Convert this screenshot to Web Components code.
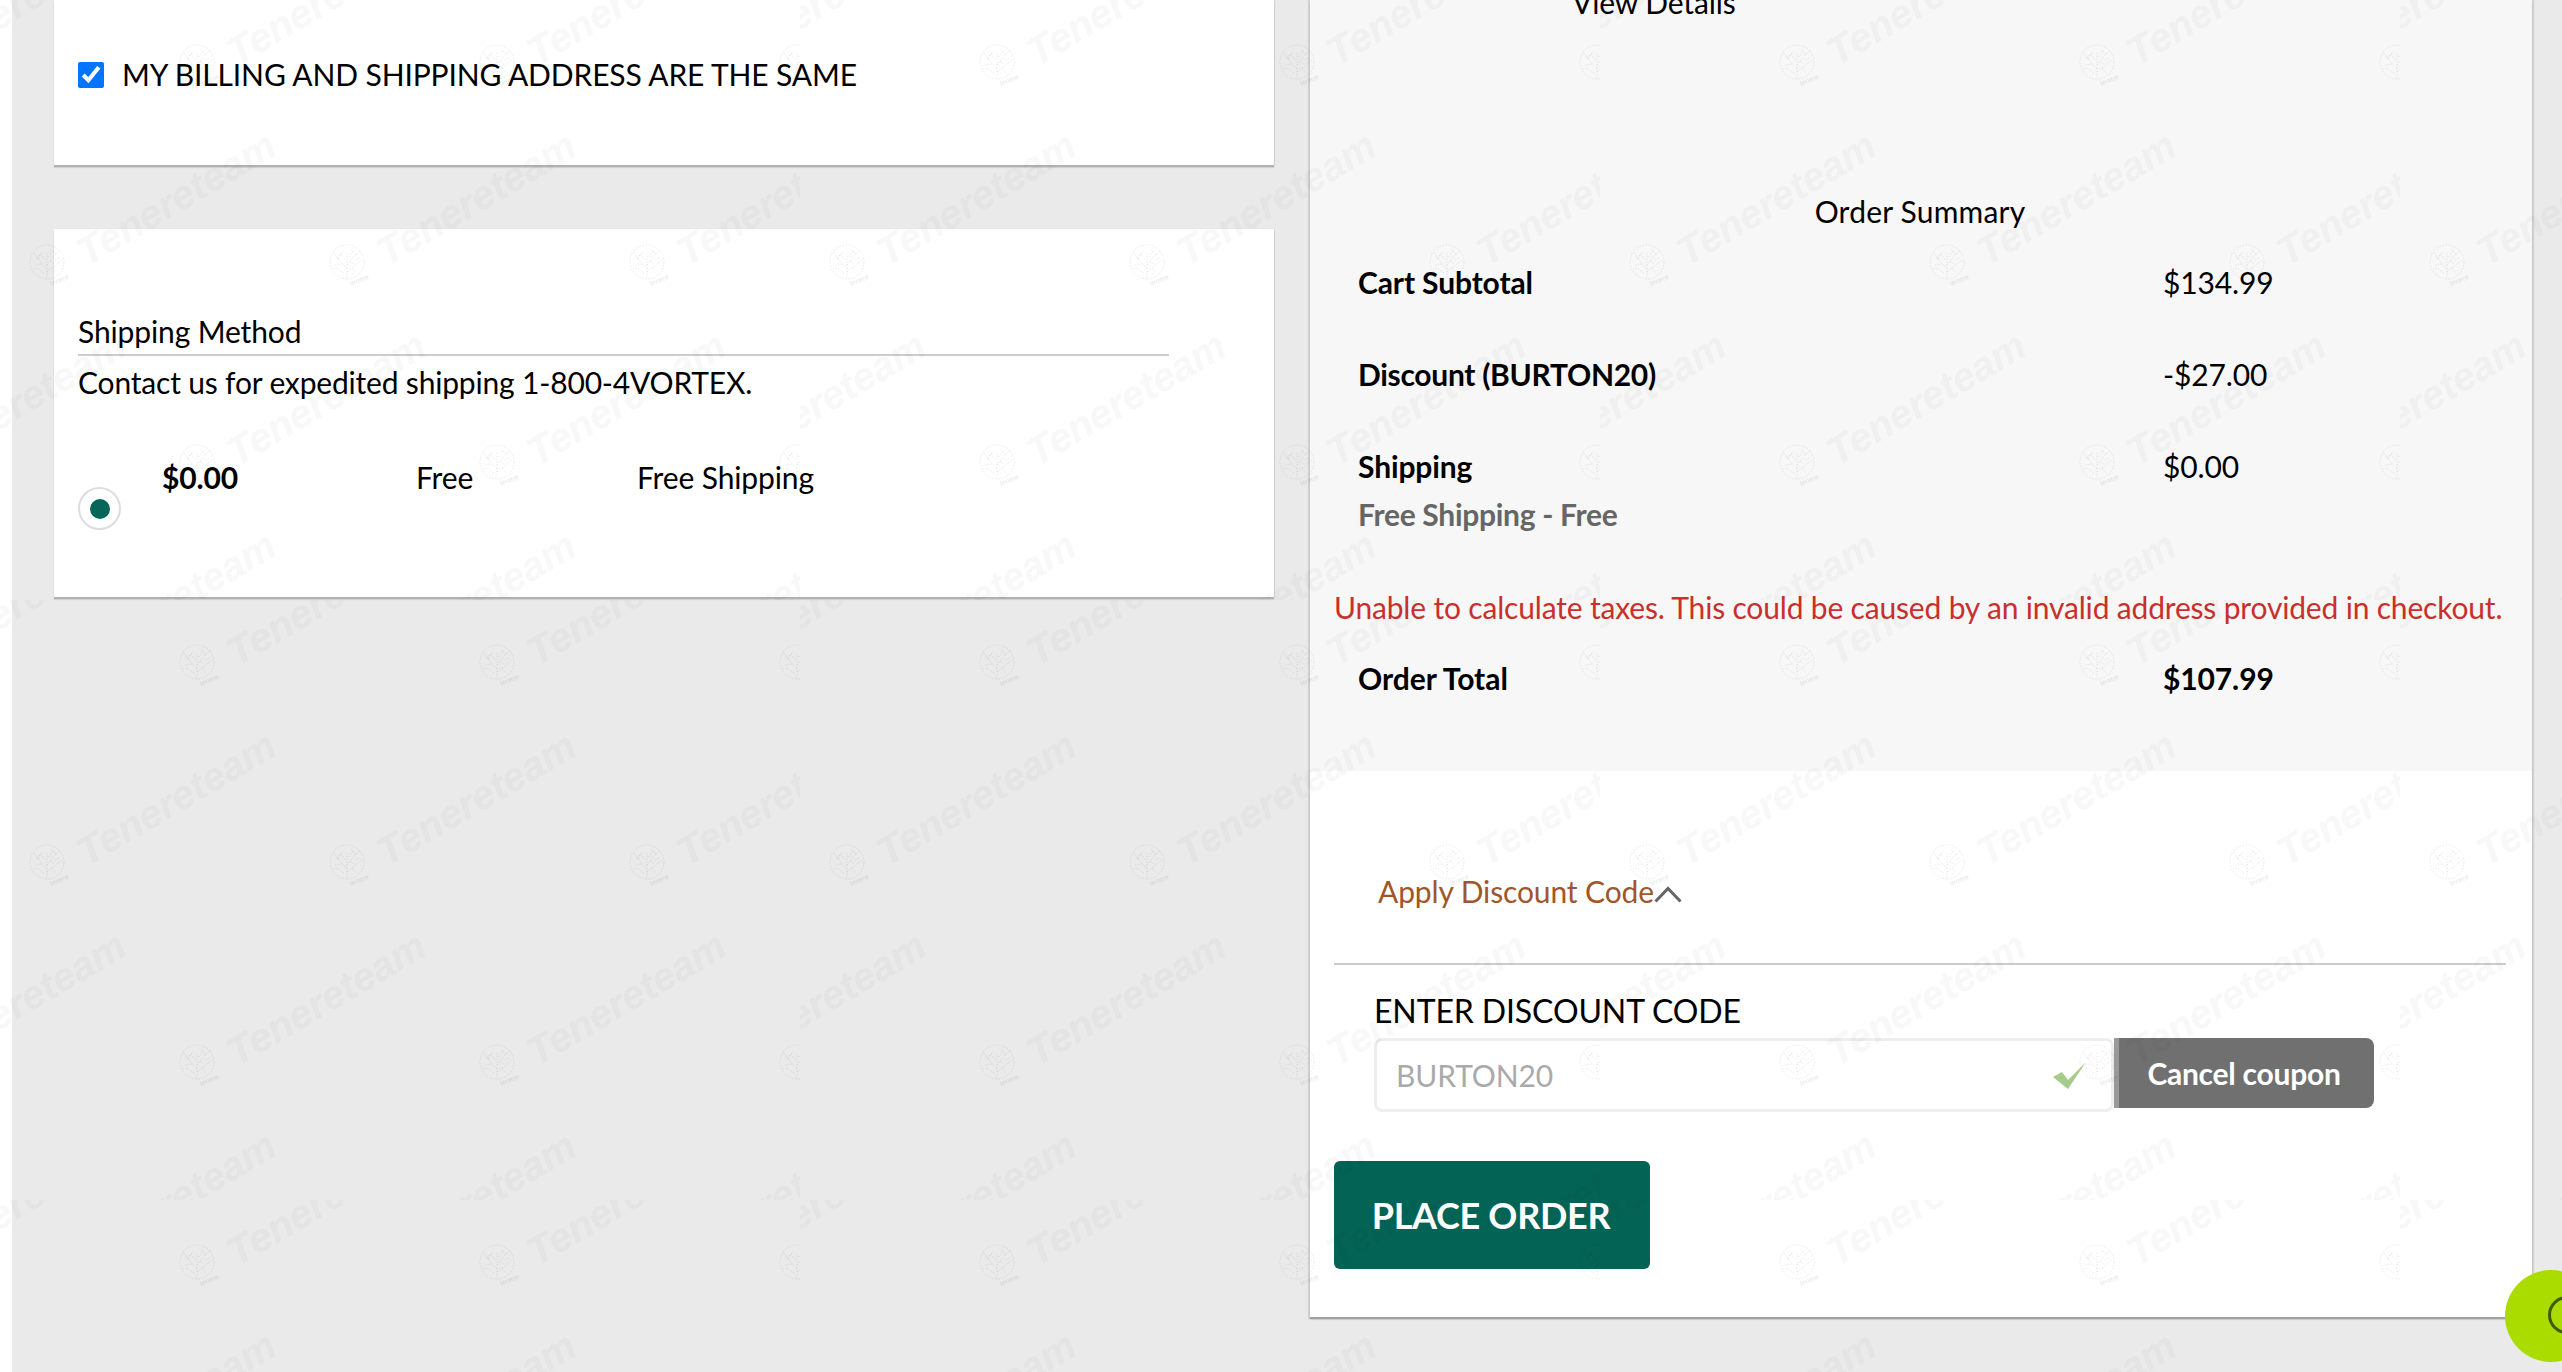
<!DOCTYPE html>
<html lang="en"><head><meta charset="utf-8"><title>Checkout</title>
<style>
html,body{margin:0;padding:0;background:#fff;overflow:hidden}
body{font-family:Lato,"Liberation Sans",sans-serif;color:#000}
</style></head><body>
<checkout-page>
  <co-card slot="left" style="height:165px">
    <same-address>MY BILLING AND SHIPPING ADDRESS ARE THE SAME</same-address>
  </co-card>
  <co-card slot="left" style="height:368px;margin-top:64px">
    <ship-method></ship-method>
  </co-card>
  <order-panel slot="right"></order-panel>
</checkout-page>
<water-mark></water-mark>
<chat-bubble></chat-bubble>
<script>
const T=(css,html)=>{const t=document.createElement('template');t.innerHTML='<style>'+css+'</style>'+html;return t;};
const def=(name,tpl)=>customElements.define(name,class extends HTMLElement{constructor(){super();this.attachShadow({mode:'open'}).appendChild(tpl.content.cloneNode(true));}});

def('checkout-page',T(`
:host{display:block;width:2562px;height:1372px;overflow:hidden;background:#fff;padding-left:12px;box-sizing:border-box}
.main{height:100%;background:#eaeaea;display:grid;grid-template-columns:1220px 1222px;column-gap:36px;padding-left:42px;align-items:start}
.col{display:block}
`,`<div class="main"><div class="col"><slot name="left"></slot></div><div class="col"><slot name="right"></slot></div></div>`));

def('co-card',T(`
:host{display:block;background:#fff;box-shadow:0 2px 1px rgba(0,0,0,.17),0 3px 1px rgba(0,0,0,.08),1px 0 1px rgba(0,0,0,.07);box-sizing:border-box;padding:0 24px}
`,`<slot></slot>`));

def('same-address',T(`
:host{display:flex;align-items:center;gap:18px;height:150px;font-size:30px;line-height:40px;letter-spacing:-.12px}
input{width:26px;height:26px;margin:0 0 1px}
span{position:relative;top:-1px}
`,`<input type="checkbox" checked aria-label="same address"><span><slot></slot></span>`));

def('ship-method',T(`
:host{display:block;font-size:30px;line-height:40px;letter-spacing:-.12px;padding-top:82px}
.h{border-bottom:2px solid #ccc;width:1091px;height:43px;line-height:40px}
.c{margin-top:6px;letter-spacing:-.18px}
.opt{display:grid;grid-template-columns:84px 254px 221px 1fr;margin-top:55px;height:100px}
.radio{width:43px;height:43px;box-sizing:border-box;border:2px solid #ddd;border-radius:50%;display:flex;align-items:center;justify-content:center;margin-top:30px}
.radio i{display:block;width:20px;height:20px;border-radius:50%;background:#07665a}
b{font-weight:700}
`,`<div class="h">Shipping Method</div><div class="c">Contact us for expedited shipping 1-800-4VORTEX.</div>
<div class="opt"><div class="radio"><i></i></div><b>$0.00</b><span>Free</span><span>Free Shipping</span></div>`));

def('sum-row',T(`
:host{display:grid;grid-template-columns:805px 1fr;padding-left:48px;line-height:40px}
::slotted([slot=l]){font-weight:700}
`,`<slot name="l"></slot><slot name="v"></slot>`));

def('order-panel',T(`
:host{display:block;height:1317px;background:#fff;box-shadow:0 2px 1px rgba(0,0,0,.17),0 3px 1px rgba(0,0,0,.08),0 0 1px 2px rgba(0,0,0,.1);font-size:30px;line-height:40px;letter-spacing:-.12px}
.top{height:771px;background:#f7f7f7;overflow:hidden;box-sizing:border-box}
.vd{margin-top:-18px;padding-left:262px;height:40px}
.os{margin-top:169px;text-align:center;height:40px;letter-spacing:.2px;padding-right:2px}
sum-row{margin-bottom:52px}
.cart{margin-top:31px}
.tight{letter-spacing:-.3px}
.fs{padding-left:48px;font-weight:700;color:#666;margin-top:-44px;letter-spacing:-.3px}
.err{margin-top:53px;padding-left:24px;color:#c9302c;white-space:nowrap;height:40px;letter-spacing:-.175px}
.tot{margin-top:31px}
.tot span{letter-spacing:0}
.bot{padding:100px 26px 0 24px}
.apply{display:flex;align-items:center;padding-left:44px;color:#a0562a;height:40px}
.apply svg{margin-top:7px}
.rule{height:2px;background:#ccc;margin-top:52px}
.lab{margin:26px 0 0 40px;height:40px;line-height:40px;font-size:32px}
.form{display:flex;margin:7px 0 0 40px;height:70px}
.input{box-sizing:border-box;width:740px;height:74px;border:3px solid #eee;border-radius:8px;display:flex;align-items:center;justify-content:space-between;padding:0 25px 0 19px;color:#aaa;background:#fff}
.cancel{box-sizing:border-box;width:260px;height:70px;background:#707070;border-left:5px solid #999;border-radius:0 8px 8px 0;color:#fff;display:flex;align-items:center;justify-content:center;font-weight:700;letter-spacing:-.25px;padding-right:5px}
.place{margin-top:53px;width:316px;height:108px;background:#036355;border-radius:6px;color:#fff;display:flex;align-items:center;justify-content:center;font-size:36px;font-weight:700;letter-spacing:-.3px;padding-right:2px;box-sizing:border-box}
`,`<div class="top">
<div class="vd">View Details</div>
<div class="os">Order Summary</div>
<sum-row class="cart"><span slot="l">Cart Subtotal</span><span slot="v">$134.99</span></sum-row>
<sum-row><span slot="l" class="tight">Discount (BURTON20)</span><span slot="v">-$27.00</span></sum-row>
<sum-row><span slot="l">Shipping</span><span slot="v">$0.00</span></sum-row>
<div class="fs">Free Shipping - Free</div>
<div class="err">Unable to calculate taxes. This could be caused by an invalid address provided in checkout.</div>
<sum-row class="tot"><span slot="l">Order Total</span><b slot="v">$107.99</b></sum-row>
</div>
<div class="bot">
<div class="apply">Apply Discount Code<svg width="28" height="17" viewBox="0 0 28 17"><path d="M1.5 15.5 14 2.5 26.5 15.5" fill="none" stroke="#666" stroke-width="3"/></svg></div>
<div class="rule"></div>
<div class="lab">ENTER DISCOUNT CODE</div>
<div class="form"><div class="input"><span>BURTON20</span><svg width="33" height="27" viewBox="0 0 33 27"><path d="M0 15 9 10 15 18 33 0 15 27Z" fill="#a5cc8a"/></svg></div><div class="cancel">Cancel coupon</div></div>
<div class="place">PLACE ORDER</div>
</div>`));

const rows=[[65,197],[265,47],[465,197],[665,47]];
let uses='';
for(const [y,x0] of rows){for(let x=x0-300;x<=800;x+=300){uses+=`<use href="#wm-item" x="${x}" y="${y}"/>`;}}
def('water-mark',T(`
:host{position:absolute;left:0;top:0;width:2562px;height:1372px;pointer-events:none;display:block}
svg{display:block}
`,`<svg width="2562" height="1372" aria-hidden="true"><defs>
<g id="wm-item">
  <g fill="none" stroke="#000" stroke-opacity=".07" stroke-width="1" stroke-dasharray="1.5 1.5">
    <circle cx="0" cy="-3" r="17"/>
    <path d="M0 13V-12M0 4-9-6M0 0 9-11M0 7 11-2M-9-6-13-12M-9-6-4-14M9-11 4-16M9-11 13-14M11-2 15-5M-5-1-12 0M-3 8-10 3M-10 3-14 4M-2-5-6-11M3-4 7-1M6-14 2-8M5 3 9 8M-7-10-11-7M12-7 8-5"/>
  </g>
  <text x="0" y="0" transform="translate(4 21) rotate(-22)" font-family="Liberation Sans" font-size="7" fill="#000" fill-opacity=".1">tenere</text>
  <text x="0" y="0" transform="translate(40 2) rotate(-30.5)" font-family="Liberation Sans" font-weight="700" font-style="italic" font-size="40" fill="#000" fill-opacity=".028">Tenereteam</text>
</g>
<pattern id="wm" width="800" height="600" patternUnits="userSpaceOnUse">${uses}</pattern>
</defs><rect width="2562" height="1372" fill="url(#wm)"/></svg>`));

def('chat-bubble',T(`
:host{position:absolute;left:2505px;top:1270px;width:57px;height:92px;overflow:hidden;display:block}
.b{width:92px;height:92px;border-radius:46px;background:#abdc00;position:relative}
svg{position:absolute;left:42px;top:25px}
`,`<div class="b"><svg width="40" height="40" viewBox="0 0 40 40"><circle cx="20" cy="20" r="17.5" fill="none" stroke="#3f5c00" stroke-width="3"/></svg></div>`));
</script>
</body></html>
